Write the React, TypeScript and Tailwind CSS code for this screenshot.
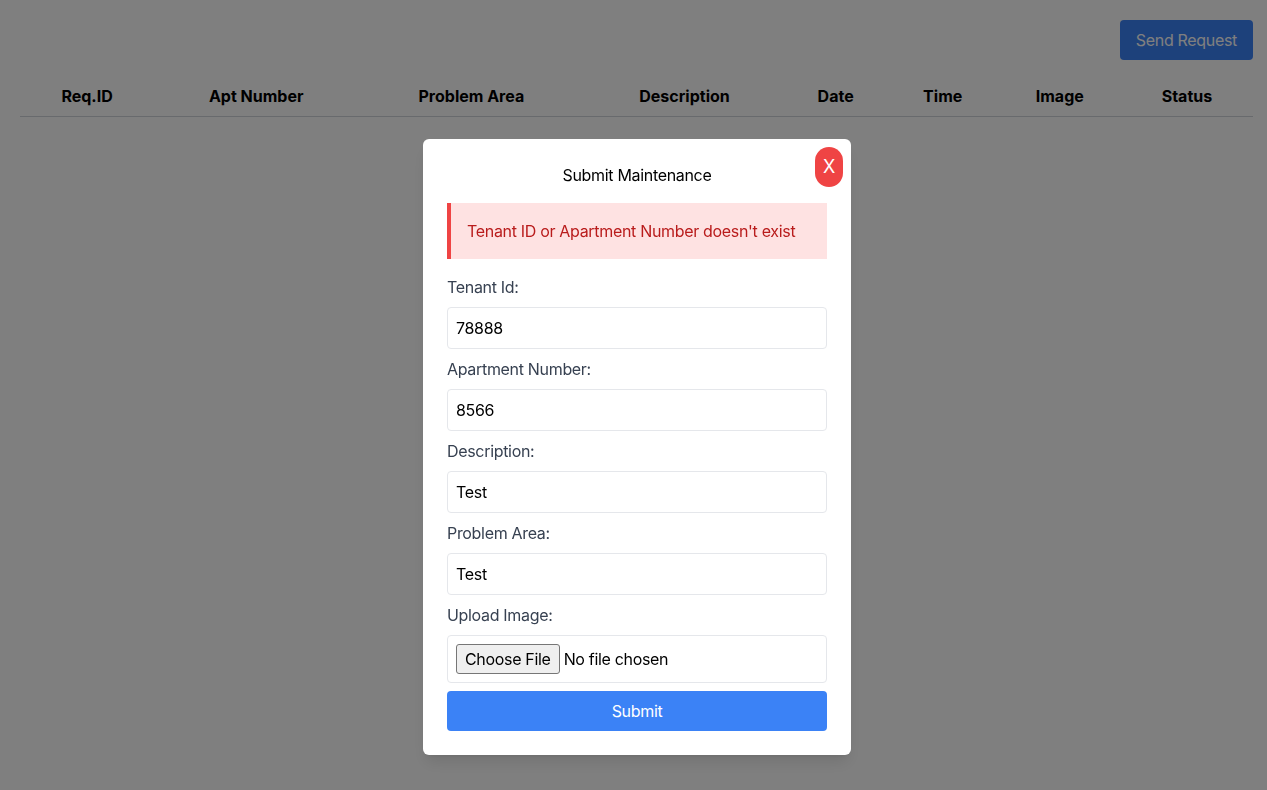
import { useState } from "react";

const COLUMNS = [
  { label: "Req.ID", w: "w-[134px]" },
  { label: "Apt Number", w: "w-[204px]" },
  { label: "Problem Area", w: "w-[226px]" },
  { label: "Description", w: "w-[200px]" },
  { label: "Date", w: "w-[102px]" },
  { label: "Time", w: "w-[112px]" },
  { label: "Image", w: "w-[122px]" },
  { label: "Status", w: "w-[132px]" },
];

function Field({ label, value }: { label: string; value: string }) {
  return (
    <div className="mb-2">
      <label className="mb-2 block text-[#374151]">{label}</label>
      <input
        type="text"
        defaultValue={value}
        className="block w-full rounded-sm border border-[#e5e7eb] px-2 py-2 text-black outline-none"
      />
    </div>
  );
}

export default function App() {
  const [open, setOpen] = useState(true);

  return (
    <div className="min-h-[790px] bg-white font-['Inter',sans-serif] tracking-[-0.02em]">
      <div className="pl-5 pr-[14px] pt-5">
        <div className="flex justify-end">
          <button
            type="button"
            onClick={() => setOpen(true)}
            className="rounded bg-[#3b82f6] px-4 py-2 text-white"
          >
            Send Request
          </button>
        </div>
        <table className="mt-4 w-full table-fixed">
          <thead>
            <tr className="border-b border-[#d1d5db]">
              {COLUMNS.map((c) => (
                <th
                  key={c.label}
                  className={`${c.w} py-2 text-center font-bold tracking-normal text-black`}
                >
                  {c.label}
                </th>
              ))}
            </tr>
          </thead>
          <tbody />
        </table>
      </div>

      {open && (
        <div className="fixed inset-0 flex items-start justify-center bg-black/50 pl-[7px] pt-[139px]">
          <div className="relative w-[428px] rounded-md bg-white p-6 shadow-lg">
            <button
              type="button"
              onClick={() => setOpen(false)}
              className="absolute right-2 top-2 rounded-full bg-[#ef4444] px-2 py-2 text-lg leading-6 text-white"
            >
              X
            </button>
            <h2 className="mb-4 text-center text-black">Submit Maintenance</h2>

            <div className="mb-4 border-l-4 border-[#ef4444] bg-[#fee2e2] p-4 text-[#b91c1c]">
              Tenant ID or Apartment Number doesn't exist
            </div>

            <form onSubmit={(e) => e.preventDefault()}>
              <Field label="Tenant Id:" value="78888" />
              <Field label="Apartment Number:" value="8566" />
              <Field label="Description:" value="Test" />
              <Field label="Problem Area:" value="Test" />
              <div className="mb-2">
                <label className="mb-2 block text-[#374151]">Upload Image:</label>
                <input
                  type="file"
                  className="block w-full rounded-sm border border-[#e5e7eb] px-2 py-2 text-black file:mr-1 file:rounded-[3px] file:border file:border-[#767676] file:bg-[#efefef] file:px-2 file:py-[2px] file:text-black"
                />
              </div>
              <button type="submit" className="w-full rounded bg-[#3b82f6] py-2 text-white">
                Submit
              </button>
            </form>
          </div>
        </div>
      )}
    </div>
  );
}
